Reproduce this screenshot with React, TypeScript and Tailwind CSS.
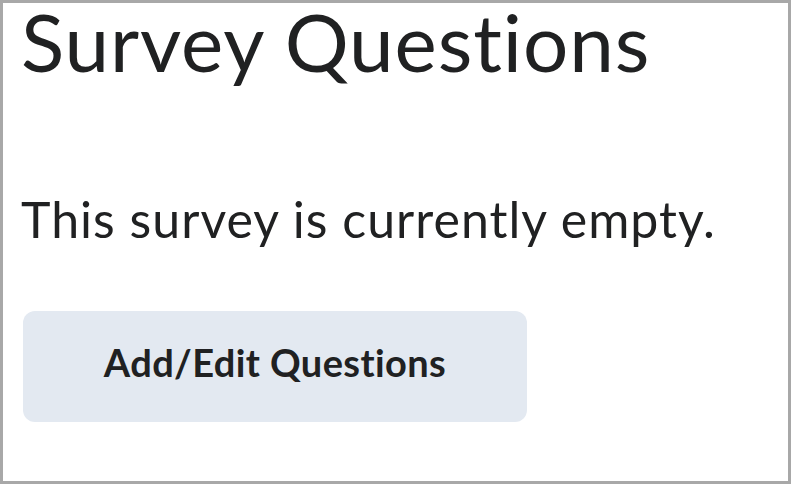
export default function App() {
  return (
    <div
      className="h-[484px] w-[791px] overflow-hidden border-[3px] border-[#a8a8a8] bg-white pl-[20px] text-[#202122] [font-variant-ligatures:none]"
      style={{ fontFamily: 'Lato, "Noto Sans", sans-serif' }}
    >
      <h1 className="-ml-[2px] -mt-[2px] text-[80px] leading-[80px] font-normal tracking-[0.9px]">Survey Questions</h1>
      <p className="-ml-[2px] mt-[113px] text-[50px] leading-[50px] tracking-[1.03px]">This survey is currently empty.</p>
      <button
        type="button"
        className="mt-[67px] flex h-[111px] w-[504px] items-center justify-center rounded-[12px] bg-[#e3e9f1] pb-[8px] text-[38px] font-bold tracking-[0.4px] text-[#202122]"
      >
        Add/Edit Questions
      </button>
    </div>
  );
}
